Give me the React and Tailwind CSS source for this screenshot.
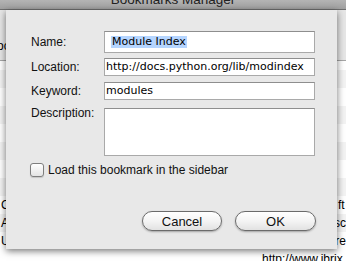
export default function App() {
  const rows = [
    { left: "", right: "" },
    { left: "", right: "" },
    { left: "", right: "" },
    { left: "", right: "" },
    { left: "", right: "" },
    { left: "", right: "" },
    { left: "", right: "" },
    { left: "C", right: "ft" },
    { left: "A", right: "sc" },
    { left: "U", right: "pre" },
  ];
  return (
    <div className="relative w-[346px] h-[261px] overflow-hidden bg-white font-['Liberation_Sans',Arial,sans-serif] text-black">
      {/* title bar */}
      <div className="h-[10px] overflow-hidden bg-gradient-to-b from-[#b4b4b4] to-[#a0a0a0] border-b border-[#6f6f6f] flex justify-center">
        <span className="-mt-[8px] text-[13.5px] leading-[16px] text-[#222]">Bookmarks Manager</span>
      </div>
      {/* window behind */}
      <div className="h-[51px] bg-[#e6e6e6] border-b border-[#a6a6a6] flex items-center">
        <span className="-ml-[3px] mt-[22px] text-[12px] leading-[14px]">oc</span>
      </div>
      <div className="h-[9px] bg-white" />
      <div className="flex flex-col">
        {rows.map((r, i) => (
          <div
            key={i}
            className={`h-[18px] flex items-center text-[12px] leading-[14px] ${i % 2 === 0 ? "bg-[#f3f3f3]" : "bg-white"}`}
          >
            <span className="w-[337px] pl-[1px]">{r.left}</span>
            <span className="pl-[1px]">{r.right}</span>
          </div>
        ))}
        <div className="h-[18px] flex items-center text-[12px] leading-[14px] bg-white pl-[262px]">
          <span className="whitespace-nowrap">http://www.ibrix.info</span>
        </div>
      </div>

      {/* sheet dialog */}
      <div className="absolute left-[6px] top-[10px] w-[331px] h-[239px] bg-[#e8e8e8] shadow-[0_2px_7px_rgba(0,0,0,0.55)] pl-[25px] pr-[22px] pt-[21px] flex flex-col">
        <div className="flex items-center h-[22px]">
          <span className="w-[73px] text-[12px] leading-[14px] text-[#111]">Name:</span>
          <div className="w-[211px] h-[22px] bg-white border border-[#a9a9a9] border-t-[#8e8e8e] flex items-center pl-[6px] font-['DejaVu_Sans',sans-serif] text-[11px]">
            <span className="bg-[#b5d5ff] leading-[10px] py-[1px] px-[1px] whitespace-nowrap">Module Index</span>
          </div>
        </div>
        <div className="flex items-center h-[18px] mt-[5px]">
          <span className="w-[73px] text-[12px] leading-[14px] text-[#111]">Location:</span>
          <div className="w-[211px] h-[18px] bg-white border border-[#a9a9a9] border-t-[#8e8e8e] flex items-center pl-[1px] font-['DejaVu_Sans',sans-serif] text-[11px] whitespace-nowrap overflow-hidden">
            http://docs.python.org/lib/modindex
          </div>
        </div>
        <div className="flex items-center h-[18px] mt-[6px]">
          <span className="w-[73px] text-[12px] leading-[14px] text-[#111]">Keyword:</span>
          <div className="w-[211px] h-[18px] bg-white border border-[#a9a9a9] border-t-[#8e8e8e] flex items-center pl-[1px] font-['DejaVu_Sans',sans-serif] text-[11px]">
            modules
          </div>
        </div>
        <div className="flex items-start mt-[8px]">
          <span className="w-[73px] -mt-[2px] text-[12px] leading-[14px] text-[#111]">Description:</span>
          <div className="w-[211px] h-[48px] bg-white border border-[#a9a9a9] border-t-[#8e8e8e]" />
        </div>
        <div className="flex items-center mt-[7px] -ml-[1px] h-[14px]">
          <div className="w-[14px] h-[14px] rounded-[3px] border border-[#7e7e7e] bg-gradient-to-b from-white to-[#e4e4e4] shadow-[0_1px_1px_rgba(0,0,0,0.15)]" />
          <span className="ml-[4px] text-[12px] leading-[14px] text-[#111]">Load this bookmark in the sidebar</span>
        </div>
        <div className="flex justify-end gap-[13px] mt-[34px] -mr-[1px]">
          <div className="w-[80px] h-[20px] rounded-full border border-[#6b6b6b] bg-gradient-to-b from-white via-[#f4f4f4] to-[#e2e2e2] shadow-[0_1px_2px_rgba(0,0,0,0.3)] flex items-center justify-center text-[13px] leading-[15px] text-[#111]">
            Cancel
          </div>
          <div className="w-[81px] h-[20px] rounded-full border border-[#6b6b6b] bg-gradient-to-b from-white via-[#f4f4f4] to-[#e2e2e2] shadow-[0_1px_2px_rgba(0,0,0,0.3)] flex items-center justify-center text-[13px] leading-[15px] text-[#111]">
            OK
          </div>
        </div>
      </div>
    </div>
  );
}
